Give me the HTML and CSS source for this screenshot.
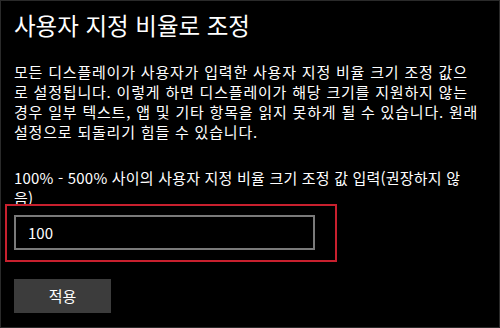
FILE: index.html
```html
<!DOCTYPE html>
<html lang="ko">
<head>
<meta charset="utf-8">
<link rel="stylesheet" href="styles.css">
</head>
<body>
<div class="page">
  <h1 class="title">사용자 지정 비율로 조정</h1>
  <p class="desc">모든 디스플레이가 사용자가 입력한 사용자 지정 비율 크기 조정 값으<br>로 설정됩니다. 이렇게 하면 디스플레이가 해당 크기를 지원하지 않는<br>경우 일부 텍스트, 앱 및 기타 항목을 읽지 못하게 될 수 있습니다. 원래<br>설정으로 되돌리기 힘들 수 있습니다.</p>
  <p class="label">100% - 500% 사이의 사용자 지정 비율 크기 조정 값 입력(권장하지 않<br>음)</p>
  <div class="field">
    <div class="input">100</div>
    <div class="highlight"></div>
  </div>
  <div class="button">적용</div>
</div>
</body>
</html>
```
FILE: styles.css
```css
html, body {
  margin: 0;
  padding: 0;
}
body {
  width: 500px;
  height: 328px;
  background: #000;
  overflow: hidden;
}
.page {
  box-sizing: border-box;
  width: 500px;
  height: 328px;
  border: 1px solid #2a2a2a;
  padding: 9px 0 0 13px;
  color: #fff;
  font-family: "Noto Sans CJK KR", "Noto Sans", sans-serif;
}
.title {
  margin: 0;
  font-size: 23.5px;
  font-weight: 400;
  line-height: 30px;
  white-space: nowrap;
}
.desc {
  margin: 22px 0 0 0;
  font-size: 15px;
  letter-spacing: 0.8px;
  line-height: 20px;
  white-space: nowrap;
}
.label {
  margin: 26px 0 0 0;
  font-size: 15px;
  letter-spacing: 0.2px;
  line-height: 20px;
  white-space: nowrap;
}
.field {
  position: relative;
  margin-top: 7px;
  width: 301px;
}
.input {
  box-sizing: border-box;
  height: 35px;
  border: 2px solid #7a7a7a;
  padding: 0 0 0 12px;
  font-size: 15px;
  line-height: 31px;
}
.highlight {
  position: absolute;
  left: -9px;
  top: -11px;
  right: -22px;
  bottom: -12px;
  border: 2px solid #c8202e;
}
.button {
  margin-top: 29px;
  width: 97px;
  height: 34px;
  background: #3c3c3c;
  font-size: 15px;
  line-height: 34px;
  text-align: center;
}
```
